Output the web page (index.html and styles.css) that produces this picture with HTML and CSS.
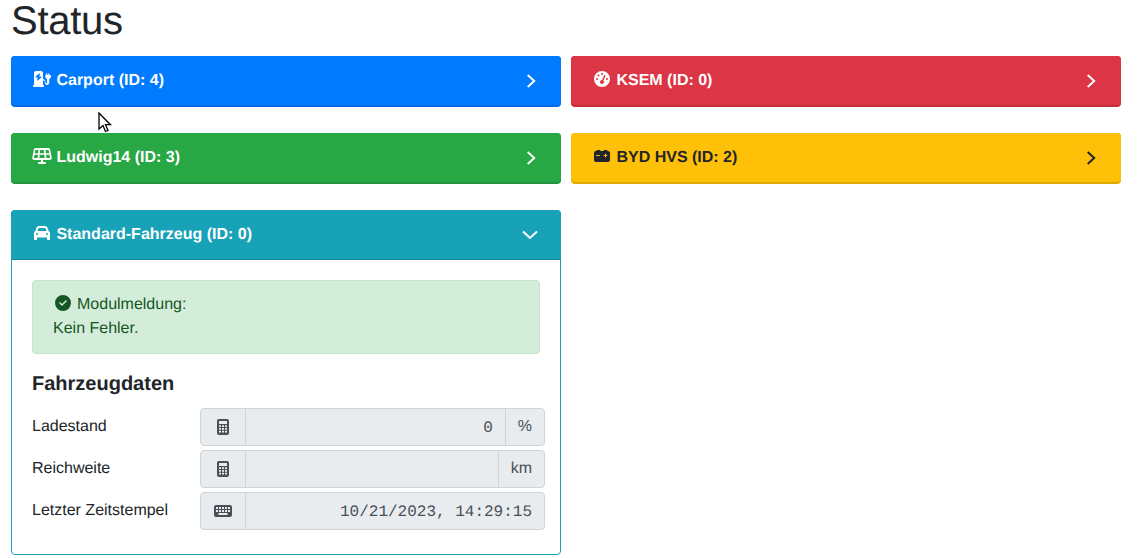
FILE: index.html
```html
<!DOCTYPE html>
<html lang="de">
<head>
<meta charset="utf-8">
<title>Status</title>
<link rel="stylesheet" href="styles.css">
</head>
<body>
<main class="page">
  <h1 class="title">Status</h1>
  <div class="grid">
    <section class="card card-blue">
      <header class="head">
        <span class="head-title">
          <span class="ico"><svg viewBox="0 0 576 512" width="18" height="16"><path fill="currentColor" d="M96 0C60.700 0 32 28.700 32 64V448c-17.700 0-32 14.300-32 32s14.300 32 32 32H320c17.700 0 32-14.300 32-32s-14.300-32-32-32V304h16c22.100 0 40 17.900 40 40v32c0 39.800 32.200 72 72 72s72-32.200 72-72V252.300c32.500-10.200 56-40.500 56-76.300V144c0-8.800-7.200-16-16-16H520V80c0-8.800-7.200-16-16-16s-16 7.200-16 16v48H456V80c0-8.800-7.200-16-16-16s-16 7.200-16 16v48H408c-8.800 0-16 7.200-16 16v32c0 35.800 23.500 66.100 56 76.300V376c0 13.300-10.700 24-24 24s-24-10.700-24-24V344c0-48.600-39.400-88-88-88H320V64c0-35.300-28.700-64-64-64H96zM216.900 82.700c6 4 8.500 11.500 6.300 18.300l-25 74.900H256c6.700 0 12.700 4.200 15 10.400s.5 13.300-4.600 17.700l-112 96c-5.500 4.700-13.400 5.100-19.300 1.100s-8.500-11.500-6.300-18.300l25-74.900H96c-6.700 0-12.700-4.200-15-10.400s-.5-13.300 4.600-17.700l112-96c5.500-4.700 13.400-5.100 19.300-1.100z"/></svg></span>
          <span>Carport (ID: 4)</span>
        </span>
        <svg class="chev" viewBox="0 0 16 16" width="16" height="16"><path d="M5.700 2l6.500 6-6.500 6" fill="none" stroke="currentColor" stroke-width="2"/></svg>
      </header>
    </section>
    <section class="card card-red">
      <header class="head">
        <span class="head-title">
          <span class="ico"><svg viewBox="0 0 512 512" width="16" height="16"><path fill="currentColor" d="M0 256a256 256 0 1 1 512 0A256 256 0 1 1 0 256zM288 96a32 32 0 1 0-64 0 32 32 0 1 0 64 0zM256 416c35.300 0 64-28.700 64-64c0-17.400-6.900-33.100-18.100-44.600L366 161.700c5.300-12.100-.2-26.300-12.300-31.600s-26.300.2-31.600 12.300L257.900 288c-.6 0-1.300 0-1.900 0c-35.300 0-64 28.700-64 64s28.700 64 64 64zM176 144a32 32 0 1 0-64 0 32 32 0 1 0 64 0zM96 288a32 32 0 1 0 0-64 32 32 0 1 0 0 64zm352-32a32 32 0 1 0-64 0 32 32 0 1 0 64 0z"/></svg></span>
          <span>KSEM (ID: 0)</span>
        </span>
        <svg class="chev" viewBox="0 0 16 16" width="16" height="16"><path d="M5.700 2l6.500 6-6.500 6" fill="none" stroke="currentColor" stroke-width="2"/></svg>
      </header>
    </section>
    <section class="card card-green">
      <header class="head">
        <span class="head-title">
          <span class="ico"><svg viewBox="0 0 640 512" width="20" height="16"><path fill="currentColor" fill-rule="evenodd" d="M122.200 0C91.700 0 65.500 21.500 59.500 51.400L8.300 307.400C.4 347 30.600 384 71 384H288v64H224c-17.700 0-32 14.300-32 32s14.300 32 32 32H416c17.700 0 32-14.300 32-32s-14.300-32-32-32H352V384H569c40.400 0 70.700-37 62.800-76.600l-51.200-256C574.500 21.500 548.300 0 517.800 0H122.200zM260.900 64H379.100l10.400 104h-139L260.900 64zM195.300 168H89L109.800 64H205.700L195.300 168zM84.200 216H190.500L180.100 320H63.400L84.200 216zM244.700 216H395.300l10.400 104H234.300l10.400-104zM449.500 216H555.800l20.800 104H459.900L449.500 216zM444.700 168L434.300 64h95.900l20.800 104H444.700z"/></svg></span>
          <span>Ludwig14 (ID: 3)</span>
        </span>
        <svg class="chev" viewBox="0 0 16 16" width="16" height="16"><path d="M5.700 2l6.500 6-6.500 6" fill="none" stroke="currentColor" stroke-width="2"/></svg>
      </header>
    </section>
    <section class="card card-yellow">
      <header class="head">
        <span class="head-title">
          <span class="ico"><svg viewBox="0 0 512 512" width="16" height="16"><path fill="currentColor" d="M80 96c0-17.700 14.300-32 32-32h64c17.700 0 32 14.300 32 32l96 0c0-17.700 14.300-32 32-32h64c17.700 0 32 14.300 32 32h16c35.300 0 64 28.700 64 64V384c0 35.300-28.700 64-64 64H64c-35.300 0-64-28.700-64-64V160c0-35.300 28.700-64 64-64l16 0zm304 96c0-8.800-7.200-16-16-16s-16 7.200-16 16v32H320c-8.800 0-16 7.200-16 16s7.200 16 16 16h32v32c0 8.800 7.200 16 16 16s16-7.200 16-16V256h32c8.800 0 16-7.200 16-16s-7.200-16-16-16H384V192zM72 224c-8.800 0-16 7.200-16 16s7.200 16 16 16H176c8.800 0 16-7.200 16-16s-7.200-16-16-16H72z"/></svg></span>
          <span>BYD HVS (ID: 2)</span>
        </span>
        <svg class="chev" viewBox="0 0 16 16" width="16" height="16"><path d="M5.700 2l6.500 6-6.500 6" fill="none" stroke="currentColor" stroke-width="2"/></svg>
      </header>
    </section>
    <section class="card card-teal">
      <header class="head head-open">
        <span class="head-title">
          <span class="ico"><svg viewBox="0 0 512 512" width="16" height="16"><path fill="currentColor" d="M135.200 117.400L109.100 192H402.900l-26.100-74.600C372.300 104.600 360.200 96 346.600 96H165.400c-13.600 0-25.700 8.600-30.200 21.400zM39.600 196.800L74.800 96.300C88.300 57.800 124.600 32 165.400 32H346.600c40.800 0 77.100 25.800 90.600 64.300l35.200 100.500c23.200 9.600 39.600 32.500 39.600 59.200V400v48c0 17.700-14.300 32-32 32H448c-17.700 0-32-14.300-32-32V400H96v48c0 17.700-14.300 32-32 32H32c-17.700 0-32-14.300-32-32V400 256c0-26.700 16.400-49.600 39.600-59.200zM128 288a32 32 0 1 0-64 0 32 32 0 1 0 64 0zm288 32a32 32 0 1 0 0-64 32 32 0 1 0 0 64z"/></svg></span>
          <span>Standard-Fahrzeug (ID: 0)</span>
        </span>
        <svg class="chev" viewBox="0 0 16 16" width="16" height="16"><path d="M1 4.500l7 6.500 7-6.500" fill="none" stroke="currentColor" stroke-width="2"/></svg>
      </header>
      <div class="body">
        <div class="alert">
          <div class="alert-line">
            <svg class="alert-ico" viewBox="0 0 512 512" width="16" height="16"><path fill="currentColor" d="M256 512A256 256 0 1 0 256 0a256 256 0 1 0 0 512zM369 209L241 337c-9.400 9.400-24.600 9.400-33.900 0l-64-64c-9.400-9.400-9.400-24.600 0-33.900s24.600-9.400 33.900 0l47 47L335 175c9.400-9.400 24.600-9.400 33.900 0s9.400 24.600 0 33.900z"/></svg>
            <span>Modulmeldung:</span>
          </div>
          <div>Kein Fehler.</div>
        </div>
        <h3 class="subtitle">Fahrzeugdaten</h3>
        <div class="form-row">
          <label class="form-label">Ladestand</label>
          <div class="group">
            <span class="addon addon-start"><svg viewBox="0 0 384 512" width="12" height="16"><path fill="currentColor" fill-rule="evenodd" d="M64 0C28.700 0 0 28.700 0 64V448c0 35.300 28.700 64 64 64H320c35.300 0 64-28.700 64-64V64c0-35.300-28.700-64-64-64H64zM64 64H320V160H64zM64 200h64v56H64zM160 200h64v56h-64zM256 200h64v56h-64zM64 288h64v56H64zM160 288h64v56h-64zM256 288h64v56h-64zM64 376h64v56H64zM160 376h64v56h-64zM256 376h64v56h-64z"/></svg></span>
            <span class="value">0</span>
            <span class="addon addon-end">%</span>
          </div>
        </div>
        <div class="form-row">
          <label class="form-label">Reichweite</label>
          <div class="group">
            <span class="addon addon-start"><svg viewBox="0 0 384 512" width="12" height="16"><path fill="currentColor" fill-rule="evenodd" d="M64 0C28.700 0 0 28.700 0 64V448c0 35.300 28.700 64 64 64H320c35.300 0 64-28.700 64-64V64c0-35.300-28.700-64-64-64H64zM64 64H320V160H64zM64 200h64v56H64zM160 200h64v56h-64zM256 200h64v56h-64zM64 288h64v56H64zM160 288h64v56h-64zM256 288h64v56h-64zM64 376h64v56H64zM160 376h64v56h-64zM256 376h64v56h-64z"/></svg></span>
            <span class="value"></span>
            <span class="addon addon-end">km</span>
          </div>
        </div>
        <div class="form-row">
          <label class="form-label">Letzter Zeitstempel</label>
          <div class="group">
            <span class="addon addon-start"><svg viewBox="0 0 576 512" width="18" height="16"><path fill="currentColor" fill-rule="evenodd" d="M64 64C28.700 64 0 92.700 0 128V384c0 35.300 28.700 64 64 64H512c35.300 0 64-28.700 64-64V128c0-35.300-28.700-64-64-64H64zM64 128h64v64H64zM160 128h64v64h-64zM256 128h64v64h-64zM352 128h64v64h-64zM448 128h64v64h-64zM64 224h64v64H64zM160 224h64v64h-64zM256 224h64v64h-64zM352 224h64v64h-64zM448 224h64v64h-64zM144 320H432v64H144z"/></svg></span>
            <span class="value">10/21/2023, 14:29:15</span>
          </div>
        </div>
      </div>
    </section>
  </div>
</main>
<svg class="cursor" viewBox="0 0 14 22" width="14" height="22"><path d="M1 1v16l4-3.500 2.500 6 2.500-1-2.500-5.800H12.500z" fill="#fff" stroke="#000" stroke-width="1.300"/></svg>
</body>
</html>
```
FILE: styles.css
```css
* { box-sizing: border-box; }
html, body { margin: 0; padding: 0; }
body {
  font-family: "Liberation Sans", Arial, sans-serif;
  font-size: 16px;
  line-height: 24px;
  color: #212529;
  background: #fff;
  overflow: hidden;
  text-rendering: geometricPrecision;
}
.page { width: 1132px; padding: 0 11px; }
.title {
  margin: 0 0 8px;
  height: 48px;
  padding-top: 1px;
  font-size: 40px;
  line-height: 40px;
  font-weight: 400;
  letter-spacing: -.3px;
}
.grid {
  display: grid;
  grid-template-columns: 550px 550px;
  column-gap: 10px;
  row-gap: 26px;
  align-items: start;
}
.card {
  border: 1px solid rgba(0,0,0,.125);
  border-radius: 4px;
  background: #fff;
}
.head {
  display: flex;
  justify-content: space-between;
  align-items: center;
  height: 50px;
  padding: 0 20px 0 21px;
  margin: -1px -1px 0;
  border-radius: 4px;
  font-weight: 700;
  color: #fff;
  border-bottom: 1px solid rgba(0,0,0,.125);
}
.head-title { display: flex; align-items: center; gap: 4.450px; }
.ico { display: flex; justify-content: center; width: 20px; flex: none; margin-bottom: 4px; }
.chev { flex: none; margin-right: 3px; }
.card-blue, .card-blue .head { background: #007bff; }
.card-red, .card-red .head { background: #dc3545; }
.card-green, .card-green .head { background: #28a745; }
.card-yellow, .card-yellow .head { background: #ffc107; color: #212529; }
.card-teal { border-color: #17a2b8; }
.card-teal .head { background: #17a2b8; border-radius: 4px 4px 0 0; }
.body { padding: 20px 20px 20px; }
.alert {
  height: 74px;
  padding: 12px 20px;
  background: #d4edda;
  border: 1px solid #c3e6cb;
  border-radius: 4px;
  color: #155724;
}
.alert-line { display: flex; align-items: center; gap: 6px; padding-left: 2px; }
.alert-ico { margin-bottom: 4px; }
.subtitle {
  margin: 18px 0 12px;
  font-size: 20px;
  line-height: 24px;
  font-weight: 700;
}
.form-row {
  display: flex;
  margin: 0 -5px 4px 0;
}
.form-label { width: 168px; flex: none; padding-top: 7px; }
.group {
  flex: 1;
  display: flex;
  height: 38px;
  background: #e9ecef;
  border: 1px solid #ced4da;
  border-radius: 4px;
  color: #495057;
}
.addon { display: flex; align-items: center; justify-content: center; flex: none; }
.addon-start { width: 45px; border-right: 1px solid #ced4da; }
.addon-end { padding: 0 12px; border-left: 1px solid #ced4da; }
.value {
  flex: 1;
  padding: 0 12px;
  text-align: right;
  font-family: "Liberation Mono", monospace;
  line-height: 38px;
}
.cursor { position: absolute; left: 98px; top: 112px; }
```
